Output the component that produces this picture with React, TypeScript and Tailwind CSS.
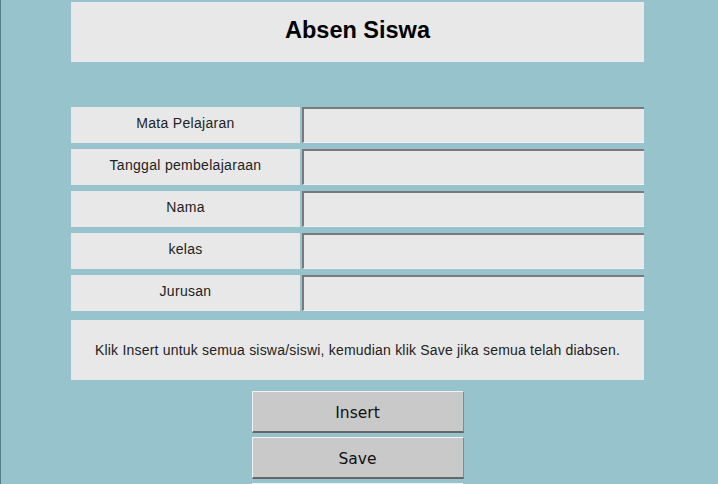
import React from "react";

const rows = ["Mata Pelajaran", "Tanggal pembelajaraan", "Nama", "kelas", "Jurusan"];

export default function App() {
  return (
    <div
      className="w-[718px] h-[484px] overflow-hidden bg-[#97c3cd] border-l border-[#557f88] flex flex-col pl-[70px] pr-[74px] pt-[2px]"
      style={{ fontFamily: '"Liberation Sans", Arial, sans-serif' }}
    >
      <div className="shrink-0 h-[60px] bg-[#e8e8e8] flex items-center justify-center pb-[3px]">
        <span className="text-[23.5px] font-bold text-black">Absen Siswa</span>
      </div>

      <div className="shrink-0 mt-[45px] flex flex-col gap-[6px]">
        {rows.map((r) => (
          <div key={r} className="shrink-0 flex h-[36px] gap-[2px]">
            <div className="w-[229px] bg-[#e8e8e8] flex items-center justify-center text-[14px] tracking-[0.3px] text-[#222] pb-[3px]">
              {r}
            </div>
            <div className="flex-1 bg-[#e8e8e8] border-t-2 border-l-2 border-[#7a7a7a] border-b border-b-[#f0f0f0]" />
          </div>
        ))}
      </div>

      <div className="shrink-0 mt-[9px] h-[60px] bg-[#e8e8e8] flex items-center justify-center text-[14px] tracking-[0.2px] text-[#222]">
        Klik Insert untuk semua siswa/siswi, kemudian klik Save jika semua telah diabsen.
      </div>

      <div className="shrink-0 mt-[11px] flex flex-col items-center gap-[4px]">
        {["Insert", "Save", ""].map((b, i) => (
          <div
            key={i}
            className="shrink-0 w-[212px] h-[42px] bg-[#c9c9c9] border-t border-l border-[#f2f2f2] border-b-2 border-b-[#666] border-r border-r-[#888] flex items-center justify-center pt-[4px] text-[15.5px] text-[#111]"
            style={{ fontFamily: '"DejaVu Sans", sans-serif' }}
          >
            {b}
          </div>
        ))}
      </div>
    </div>
  );
}
